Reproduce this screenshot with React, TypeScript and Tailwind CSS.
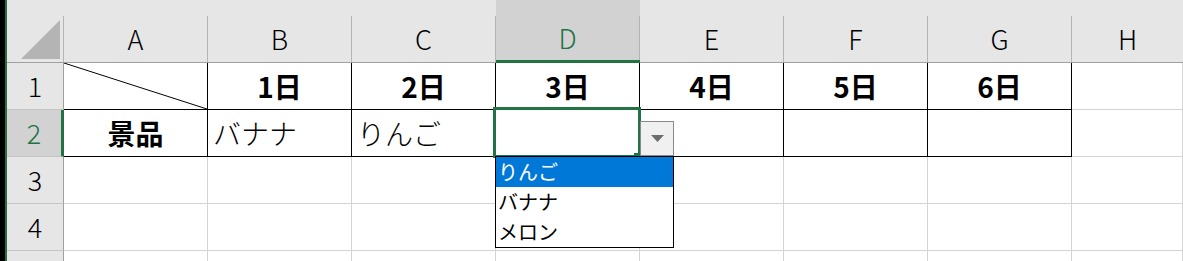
const cols = ['A', 'B', 'C', 'D', 'E', 'F', 'G', 'H']
const days = ['1日', '2日', '3日', '4日', '5日', '6日']
const options = ['りんご', 'バナナ', 'メロン']

const HeaderCell = ({ label, active, last }: { label: string; active?: boolean; last?: boolean }) => (
  <div
    className={
      'flex flex-col ' +
      (active ? 'border-b-[3px] border-[#217346] bg-[#d2d2d2]' : 'border-b border-[#a0a0a0] bg-[#e6e6e6]')
    }
  >
    <div className="h-[16px]" />
    <div
      className={
        'flex flex-1 items-center justify-center text-[27px] font-light ' +
        (last ? '' : 'border-r border-[#b4b4b4] ') +
        (active ? 'text-[#217346]' : 'text-black')
      }
    >
      {label}
    </div>
  </div>
)

const RowHeader = ({ n, active }: { n?: number; active?: boolean }) => (
  <div
    className={
      'flex items-center justify-center border-b border-[#c4c4c4] text-[27px] font-light ' +
      (active
        ? 'border-r-[3px] border-r-[#217346] bg-[#d2d2d2] text-[#217346]'
        : 'border-r border-r-[#a0a0a0] bg-[#e6e6e6] text-black')
    }
  >
    {n}
  </div>
)

const Cell = ({
  table,
  className = '',
  children,
}: {
  table?: boolean
  className?: string
  children?: React.ReactNode
}) => (
  <div
    className={
      'relative flex items-center border-r border-b ' +
      (table ? 'border-black ' : 'border-[#d4d4d4] ') +
      className
    }
  >
    {children}
  </div>
)

const Dropdown = () => (
  <>
    <div className="pointer-events-none absolute -top-[3px] -left-[3px] -right-[2px] -bottom-[2px] border-[3px] border-[#217346]" />
    <div className="absolute -right-[1px] -bottom-[3px] h-[6px] w-[6px] bg-[#217346]" />
    <div className="absolute top-[11px] left-[144px] z-10 flex h-[35px] w-[34px] items-center justify-center border border-[#8a8a8a] bg-[#f0f0f0]">
      <svg width="13" height="7" viewBox="0 0 13 7">
        <path d="M0 0 H13 L6.5 7 Z" fill="#6d6d6d" />
      </svg>
    </div>
    <div className="absolute top-[46px] -left-[1px] z-20 flex h-[92px] w-[179px] flex-col border border-black bg-white">
      {options.map((o, i) => (
        <div
          key={o}
          className={
            'flex h-[30px] items-center pl-[2px] text-[20px] leading-none ' +
            (i === 0 ? 'bg-[#0078d7] text-white' : 'text-black')
          }
        >
          {o}
        </div>
      ))}
    </div>
  </>
)

export default function App() {
  return (
    <div className="flex h-[261px] w-[1183px] overflow-hidden bg-white font-['Noto_Sans_CJK_JP',sans-serif]">
      <div className="w-[5px] shrink-0 bg-black" />
      <div className="w-[2px] shrink-0 bg-[#217346]" />
      <div className="grid flex-1 grid-cols-[57px_repeat(7,144px)_1fr] grid-rows-[63px_repeat(5,47px)]">
        {/* corner */}
        <div className="flex flex-col border-b border-[#a0a0a0] bg-[#e6e6e6]">
          <div className="h-[16px]" />
          <div className="relative flex-1 border-r border-[#b4b4b4]">
            <svg className="absolute top-[4px] left-[14px]" width="40" height="39" viewBox="0 0 40 39">
              <path d="M39 0 V39 H0 Z" fill="#b4b4b4" />
            </svg>
          </div>
        </div>
        {cols.map((c, i) => (
          <HeaderCell key={c} label={c} active={c === 'D'} last={i === cols.length - 1} />
        ))}

        {/* row 1 */}
        <RowHeader n={1} />
        <Cell table>
          <svg className="absolute inset-0 h-full w-full" preserveAspectRatio="none" viewBox="0 0 143 46">
            <line x1="0" y1="0" x2="143" y2="46" stroke="black" strokeWidth="1" />
          </svg>
        </Cell>
        {days.map((d) => (
          <Cell key={d} table className="justify-center text-[28px] font-bold">
            {d}
          </Cell>
        ))}
        <Cell />

        {/* row 2 */}
        <RowHeader n={2} active />
        <Cell table className="justify-center text-[28px] font-bold">
          景品
        </Cell>
        <Cell table className="pl-[5px] text-[28px] font-light">
          バナナ
        </Cell>
        <Cell table className="pl-[5px] text-[28px] font-light">
          りんご
        </Cell>
        <Cell table className="z-10">
          <Dropdown />
        </Cell>
        <Cell table />
        <Cell table />
        <Cell table />
        <Cell />

        {[3, 4, 0].map((n) => (
          <div key={n} className="contents">
            <RowHeader n={n || undefined} />
            {cols.map((c) => (
              <Cell key={c} />
            ))}
          </div>
        ))}
      </div>
    </div>
  )
}
